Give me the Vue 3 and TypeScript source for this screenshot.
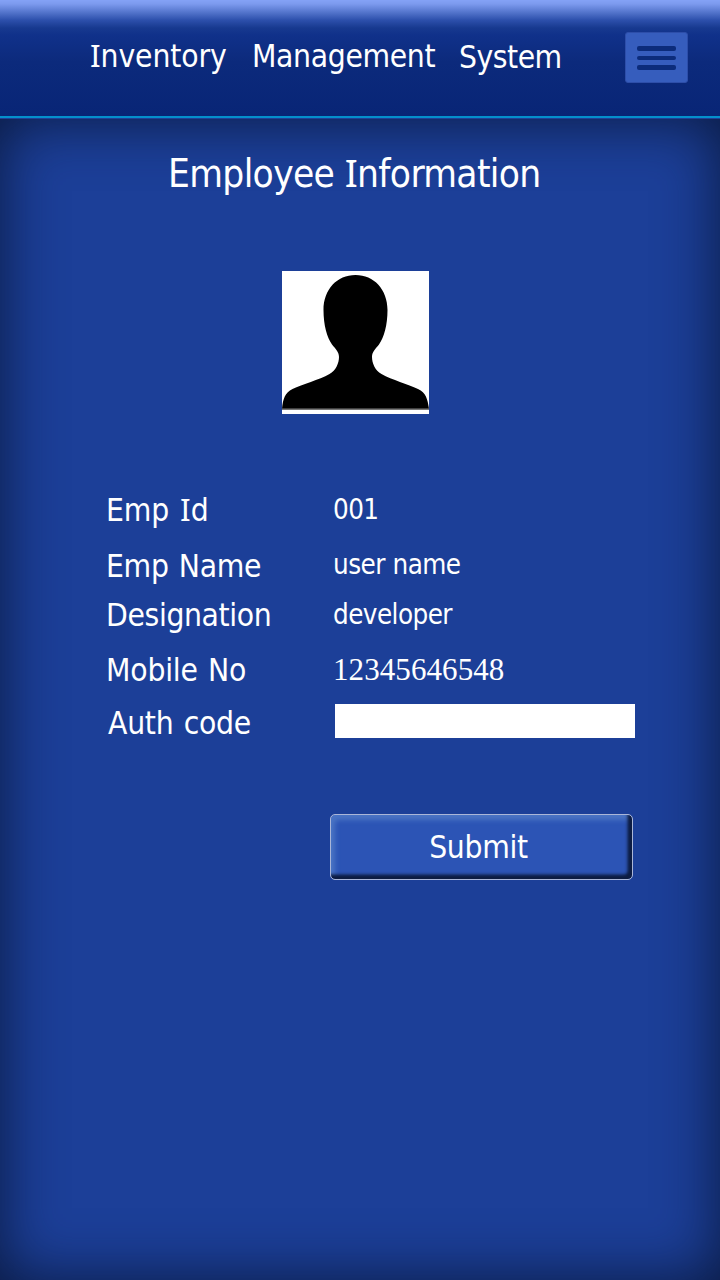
<script setup lang="ts">
import { ref } from 'vue'

interface Field {
  key: string
  label: string
  value?: string
}

const fields: Field[] = [
  { key: 'id', label: 'Emp Id', value: '001' },
  { key: 'name', label: 'Emp Name', value: 'user name' },
  { key: 'role', label: 'Designation', value: 'developer' },
  { key: 'mobile', label: 'Mobile No', value: '12345646548' },
  { key: 'auth', label: 'Auth code' },
]

const authCode = ref('')

const parts = (text: string): string[] => text.split(/(I)/).filter(Boolean)
</script>

<template>
  <div class="screen">
    <header class="topbar">
      <nav class="brand">
        <span class="word inventory"><span class="slab">I</span>nventory</span>
        <span class="word management">Management</span>
        <span class="word system">System</span>
      </nav>
      <button class="menu" type="button" aria-label="Menu">
        <span class="bar"></span>
        <span class="bar"></span>
        <span class="bar"></span>
      </button>
    </header>

    <main class="panel">
      <h1 class="title">Employee <span class="slab">I</span>nformation</h1>

      <svg class="avatar" viewBox="0 0 147 143" aria-hidden="true">
        <rect width="147" height="143" fill="#fff" />
        <path
          d="M73.500 4C92 4 105.500 18.500 105.500 39C105.500 54 102 66.500 97 73.500C94 77.500 90 80.500 90 86C90 92 93 99.500 99.500 103C110 109 126 113 136 118C144 121.500 145.500 128 147 137.800H0C1 128 3 121.500 10.500 118C20.500 113 37 109 47.500 103C54 99.500 57 92 57 86C57 80.500 53 77.500 50 73.500C45 66.500 41.500 54 41.500 39C41.500 18.500 55 4 73.500 4Z"
          fill="#000"
        />
        <rect y="138" width="147" height="1" fill="#777" />
      </svg>

      <form class="details" @submit.prevent>
        <template v-for="f in fields" :key="f.key">
          <label class="label" :class="'label-' + f.key">
            <span v-for="(p, i) in parts(f.label)" :key="i" :class="{ slab: p === 'I' }">{{ p }}</span>
          </label>
          <span v-if="f.value" class="value" :class="'value-' + f.key">{{ f.value }}</span>
          <input v-else v-model="authCode" class="auth" type="text" />
        </template>
        <button class="submit" type="submit">Submit</button>
      </form>
    </main>
  </div>
</template>

<style>
body {
  margin: 0;
}
</style>

<style scoped>
.screen {
  width: 720px;
  height: 1280px;
  display: flex;
  flex-direction: column;
  overflow: hidden;
  background: #1c3f98;
  color: #fff;
  font-family: 'DejaVu Sans Condensed', 'DejaVu Sans', sans-serif;
  font-stretch: condensed;
  font-size: 31.5px;
}
.slab {
  font-family: 'Noto Sans', sans-serif;
  line-height: 0;
}
.topbar {
  box-sizing: border-box;
  height: 118px;
  flex: none;
  display: flex;
  justify-content: space-between;
  align-items: flex-start;
  padding: 32px 32px 0 90px;
  border-bottom: 2px solid #0490cc;
  background: linear-gradient(#84a2f6 0, #7c9aee 4px, #5576cd 12px, #2d50ac 20px, #17398f 28px, #10318a 35px, #0c2a7c 62px, #082576 116px) border-box;
}
.brand {
  display: flex;
  line-height: 40px;
  padding-top: 4px;
}
.word {
  white-space: pre;
}
.inventory {
  width: 162px;
  letter-spacing: -0.1px;
}
.management {
  width: 207px;
  letter-spacing: -0.35px;
}
.system {
  padding-top: 1px;
  letter-spacing: -0.5px;
}
.menu {
  box-sizing: border-box;
  width: 63px;
  height: 51px;
  padding: 13px 11px 0;
  display: flex;
  flex-direction: column;
  gap: 5px;
  border: 1px solid #2d4ea9;
  border-radius: 3px;
  background: #365dbd;
}
.bar {
  height: 4.500px;
  flex: none;
  border-radius: 2px;
  background: #0c2c7b;
}
.panel {
  flex: 1;
  display: flex;
  flex-direction: column;
  align-items: flex-start;
  border-top: 1px solid #1f3f98;
  box-shadow: inset 0 0 60px #0a193e;
}
.title {
  margin: 30px 0 0 168px;
  font-size: 38.5px;
  font-weight: 400;
  line-height: 50px;
  letter-spacing: -0.66px;
  white-space: pre;
}
.avatar {
  width: 147px;
  height: 143px;
  margin: 72px 0 0 282px;
}
.details {
  margin: 76px 0 0 106px;
  display: grid;
  grid-template-columns: 227px 303px;
  grid-template-rows: 56px 49px 55px 53px 40px;
  line-height: 40px;
}
.label,
.value {
  white-space: pre;
  letter-spacing: -0.4px;
  word-spacing: 1.5px;
}
.label-id {
  letter-spacing: -0.15px;
  word-spacing: 2.2px;
}
.label-name {
  letter-spacing: -0.3px;
}
.label-role {
  letter-spacing: -0.38px;
}
.label-mobile {
  letter-spacing: -0.2px;
}
.label-auth {
  padding-left: 2px;
  letter-spacing: -0.25px;
}
.value {
  margin-top: -1px;
  font-size: 27.5px;
  letter-spacing: -0.55px;
  word-spacing: 0.5px;
}
.value-name {
  margin-top: -2px;
}
.value-mobile {
  margin-top: 0;
  font-family: 'Liberation Serif', serif;
  font-size: 31px;
  letter-spacing: 0.08px;
}
.auth {
  box-sizing: border-box;
  width: 300px;
  height: 34px;
  margin: 1px 0 0 2px;
  padding: 0 8px;
  border: 0;
  background: #fff;
  font: inherit;
  font-size: 24px;
}
.submit {
  box-sizing: border-box;
  grid-column: 2;
  width: 303px;
  height: 66px;
  margin: 71px 0 0 -3px;
  padding: 0 6px 0 0;
  border: 1px solid #aab6d8;
  border-radius: 5px;
  background: #2c54b5;
  box-shadow: inset -4.500px -4.500px 3px #0d1c42, inset 4px 5px 5px #4a74c4;
  color: #fff;
  font: inherit;
  line-height: 62px;
  letter-spacing: -0.3px;
}
</style>
